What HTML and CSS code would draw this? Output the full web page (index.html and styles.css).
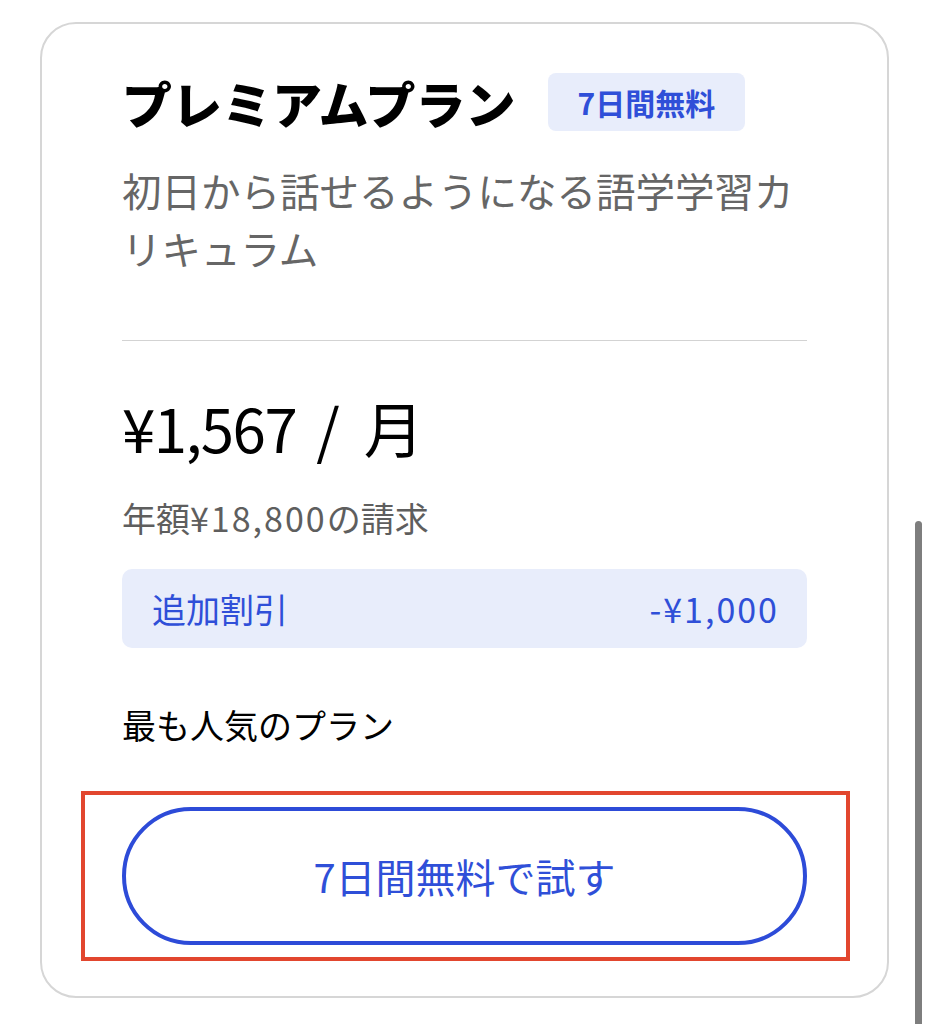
FILE: index.html
```html
<!DOCTYPE html>
<html lang="ja">
<head>
<meta charset="utf-8">
<title>プレミアムプラン</title>
<link rel="stylesheet" href="styles.css">
</head>
<body>
<div class="card">
  <div class="title-row">
    <h1 class="title">プレミアムプラン</h1>
    <span class="badge">7日間無料</span>
  </div>
  <p class="subtitle">初日から話せるようになる語学学習カリキュラム</p>
  <hr class="divider">
  <div class="price"><span class="amount">¥1,567</span><span class="slash">/</span>月</div>
  <div class="annual">年額<span class="num">¥18,800</span>の請求</div>
  <div class="discount">
    <span>追加割引</span>
    <span class="num">-¥1,000</span>
  </div>
  <div class="popular">最も人気のプラン</div>
  <div class="highlight">
    <button class="cta">7日間無料で試す</button>
  </div>
</div>
<div class="scrollbar"></div>
</body>
</html>
```
FILE: styles.css
```css
html, body {
  margin: 0;
  padding: 0;
  background: #ffffff;
}
body {
  font-family: "Noto Sans CJK JP", "Noto Sans", sans-serif;
  color: #000;
  width: 930px;
  height: 1024px;
  overflow: hidden;
  position: relative;
}
.card {
  box-sizing: border-box;
  width: 849px;
  margin: 22px 0 0 40px;
  border: 2px solid #d6d6d6;
  border-radius: 36px;
  padding: 49px 80px 35px 80px;
}
.title-row {
  display: flex;
  align-items: center;
  gap: 32px;
  height: 58px;
}
.title {
  margin: 0;
  font-size: 50px;
  font-weight: 900;
  line-height: 58px;
}
.badge {
  background: #e8edfb;
  color: #2f4fd8;
  font-size: 30px;
  font-weight: 700;
  height: 58px;
  line-height: 58px;
  padding: 0 30px;
  border-radius: 8px;
}
.subtitle {
  margin: 30px 0 0;
  font-size: 39.5px;
  line-height: 58px;
  color: #666666;
}
.divider {
  margin: 63px 0 0;
  border: 0;
  border-top: 1.5px solid #d3d3d3;
  height: 0;
}
.price {
  margin-top: 56px;
  font-size: 60px;
  line-height: 60px;
}
.amount {
  letter-spacing: -1.5px;
}
.slash {
  margin: 0 24px 0 20px;
}
.num {
  letter-spacing: 2px;
}
.annual {
  margin-top: 41px;
  font-size: 34px;
  line-height: 40px;
  color: #5e5e5e;
}
.discount {
  margin-top: 31px;
  height: 79px;
  background: #e8edfb;
  border-radius: 10px;
  display: flex;
  align-items: center;
  justify-content: space-between;
  padding: 0 28px 0 30px;
  color: #2f4fd8;
  font-size: 34px;
}
.popular {
  margin-top: 57px;
  font-size: 34px;
  line-height: 40px;
}
.highlight {
  margin: 46px -43px 0 -41px;
  border: 4px solid #e2462e;
  padding: 12px 39px 12px 37px;
}
.cta {
  display: block;
  width: 100%;
  height: 138px;
  border: 4px solid #2d4bd8;
  border-radius: 69px;
  background: #fff;
  color: #2f4fd8;
  font-family: "Noto Sans CJK JP", sans-serif;
  font-size: 40px;
  padding: 0;
}
.scrollbar {
  position: absolute;
  left: 915px;
  top: 521px;
  width: 7px;
  height: 520px;
  background: #7e7e7e;
  border-radius: 4px;
}
```
